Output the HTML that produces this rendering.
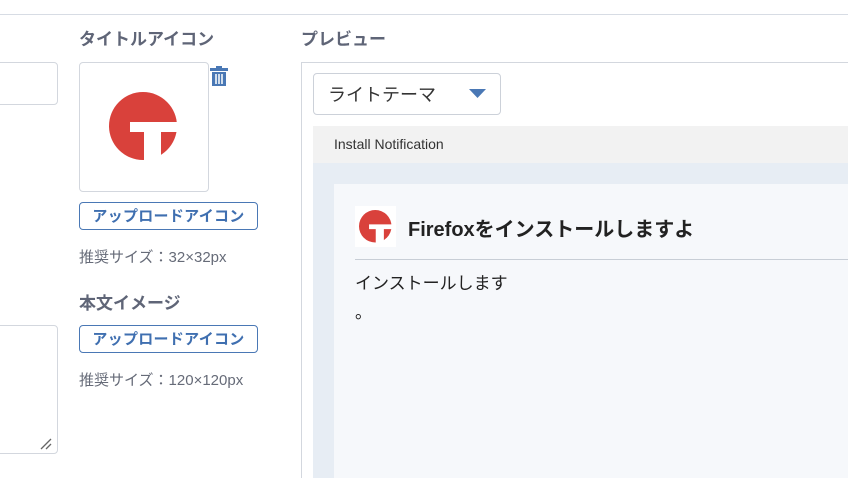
<!DOCTYPE html>
<html><head><meta charset="utf-8"><style>
html,body{margin:0;width:848px;height:478px;overflow:hidden}
body{background:#fff;font-family:"Liberation Sans","Noto Sans CJK JP",sans-serif;position:relative}
.a{position:absolute}
.lbl{color:#5f6577;font-size:17px;font-weight:bold}
.btn{border:1px solid #4a78b5;border-radius:4px;color:#3f6fb0;font-size:15px;font-weight:bold;height:28px;line-height:27px;text-align:center;box-sizing:border-box;letter-spacing:0.3px}
.hint{color:#666b78;font-size:15px}
</style></head><body>
<div class="a" style="left:0;top:14px;width:848px;height:1px;background:#d7dce4"></div>
<div class="a" style="left:-10px;top:62px;width:66px;height:41px;border:1px solid #d3d7de;border-radius:4px"></div>
<div class="a" style="left:-10px;top:325px;width:66px;height:127px;border:1px solid #d3d7de;border-radius:4px"></div>
<svg class="a" style="left:39px;top:437px" width="14" height="14"><path d="M2 12L12 2M7 12L12 7" stroke="#666" stroke-width="1.3"/></svg>
<div class="a lbl" style="left:79px;top:25px">タイトルアイコン</div>
<div class="a" style="left:79px;top:62px;width:128px;height:128px;border:1px solid #d3d7de;border-radius:4px"></div>
<svg class="a" style="left:109px;top:92px" width="69" height="69" viewBox="0 0 69 69"><circle cx="34" cy="34" r="34" fill="#d9413b"/><path d="M21 30H69V40H52V69H35V40H21Z" fill="#fff"/></svg>
<svg class="a" style="left:209px;top:65px" width="20" height="22" viewBox="0 0 20 22"><path d="M1 3H19V6H1ZM7 1H13V3H7ZM3 7H17V21H3Z" fill="#4a78b5"/><path d="M7 9V19M10 9V19M13 9V19" stroke="#fff" stroke-width="1.5"/></svg>
<div class="a btn" style="left:79px;top:202px;width:179px">アップロードアイコン</div>
<div class="a hint" style="left:79px;top:246px">推奨サイズ：32×32px</div>
<div class="a lbl" style="left:79px;top:289px">本文イメージ</div>
<div class="a btn" style="left:79px;top:325px;width:179px">アップロードアイコン</div>
<div class="a hint" style="left:79px;top:369px">推奨サイズ：120×120px</div>
<div class="a lbl" style="left:301px;top:25px">プレビュー</div>
<div class="a" style="left:301px;top:62px;width:560px;height:430px;border:1px solid #d3d7de"></div>
<div class="a" style="left:313px;top:73px;width:188px;height:42px;border:1px solid #ccd1d9;border-radius:4px;font-size:18px;color:#333;line-height:42px;padding-left:14px;box-sizing:border-box">ライトテーマ</div>
<svg class="a" style="left:469px;top:89px" width="18" height="10"><path d="M0 0H17L8.5 9Z" fill="#4a78b5"/></svg>
<div class="a" style="left:313px;top:126px;width:540px;height:37px;background:#f2f2f2;font-size:14px;color:#333;line-height:37px;padding-left:21px;box-sizing:border-box">Install Notification</div>
<div class="a" style="left:313px;top:163px;width:540px;height:320px;background:#e7edf4"></div>
<div class="a" style="left:334px;top:184px;width:520px;height:300px;background:#f6f8fb"></div>
<div class="a" style="left:355px;top:206px;width:41px;height:41px;background:#fff"></div>
<svg class="a" style="left:359px;top:210px" width="33" height="33" viewBox="0 0 69 69"><circle cx="34" cy="34" r="34" fill="#d9413b"/><path d="M21 30H69V40H52V69H35V40H21Z" fill="#fff"/></svg>
<div class="a" style="left:408px;top:213px;font-size:20px;font-weight:bold;color:#222;white-space:nowrap">Firefoxをインストールしますよ</div>
<div class="a" style="left:355px;top:259px;width:500px;height:1px;background:#c8ced6"></div>
<div class="a" style="left:355px;top:269px;font-size:17px;color:#222">インストールします</div>
<div class="a" style="left:355px;top:298px;font-size:17px;color:#222">。</div>
</body></html>
